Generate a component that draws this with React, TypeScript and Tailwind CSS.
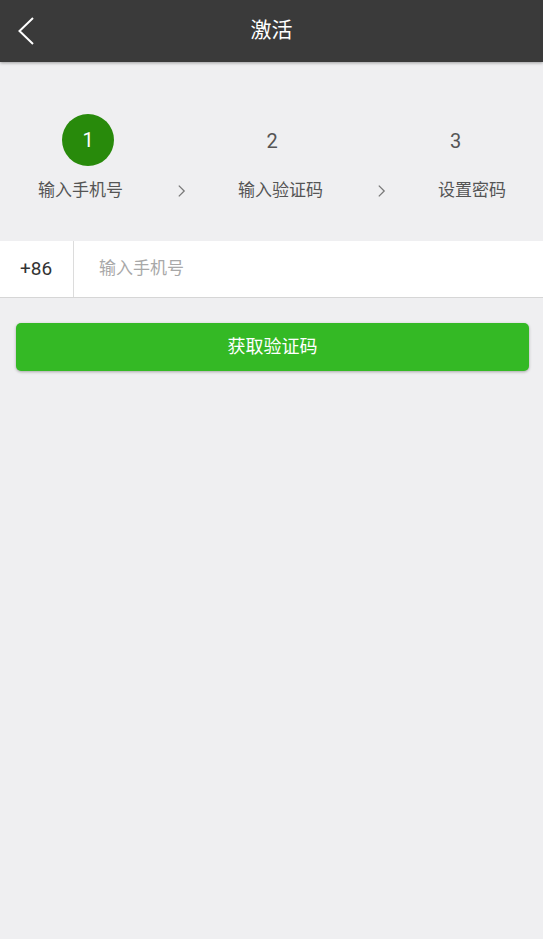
const font = { fontFamily: '"Roboto", "Noto Sans CJK SC", sans-serif' };

const Chevron = () => (
    <svg width="10" height="16" viewBox="0 0 10 16" fill="none" className="text-[#777]">
        <path d="M2 2l6 6-6 6" stroke="currentColor" strokeWidth="1.4" />
    </svg>
);

export default function App() {
    return (
        <div className="flex min-h-[939px] w-full flex-col bg-[#efeff1]" style={font}>
            <header className="relative z-10 flex h-[62px] items-center bg-[#3a3a3a] shadow-[0_1px_3px_rgba(0,0,0,0.35)]">
                <button className="flex h-full w-[50px] items-center pl-[17px]">
                    <svg width="18" height="30" viewBox="0 0 18 30" fill="none">
                        <path d="M16 2L2.5 15 16 28" stroke="#fff" strokeWidth="2" />
                    </svg>
                </button>
                <h1 className="absolute left-1/2 -translate-x-1/2 text-[21px] text-white">激活</h1>
            </header>

            <div className="mt-[52px] flex">
                <div className="flex w-[176px] justify-center">
                    <div className="flex h-[52px] w-[52px] items-center justify-center rounded-full bg-[#288a0b] text-[20px] text-white">
                        1
                    </div>
                </div>
                <div className="flex w-[192px] items-center justify-center pt-[1px] text-[20px] text-[#555]">2</div>
                <div className="flex w-[175px] items-center justify-center pt-[1px] text-[20px] text-[#555]">3</div>
            </div>

            <div className="mt-[12px] flex items-center text-[17px] text-[#555]">
                <span className="ml-[38px] w-[85px]">输入手机号</span>
                <span className="ml-[54px] flex w-[9px]"><Chevron /></span>
                <span className="ml-[52px] w-[85px]">输入验证码</span>
                <span className="ml-[54px] flex w-[9px]"><Chevron /></span>
                <span className="ml-[52px]">设置密码</span>
            </div>

            <div className="mt-[37px] flex h-[57px] border-b border-[#d6d6d6] bg-white">
                <div className="flex w-[73px] items-center pl-[20px] pt-[1px] text-[19px] text-[#333]">+86</div>
                <div className="w-px bg-[#dcdcdc]" />
                <input
                    className="flex-1 bg-transparent pl-[25px] pt-[1px] text-[17px] text-[#333] outline-none placeholder:text-[#a8a8a8]"
                    placeholder="输入手机号"
                    style={font}
                />
            </div>

            <div className="mt-[25px] ml-[16px] mr-[14px]">
                <button className="flex h-[48px] w-full items-center justify-center rounded-[5px] bg-[#34b925] text-[18px] text-white shadow-[0_1px_3px_rgba(0,0,0,0.3)]">
                    获取验证码
                </button>
            </div>
        </div>
    );
}
